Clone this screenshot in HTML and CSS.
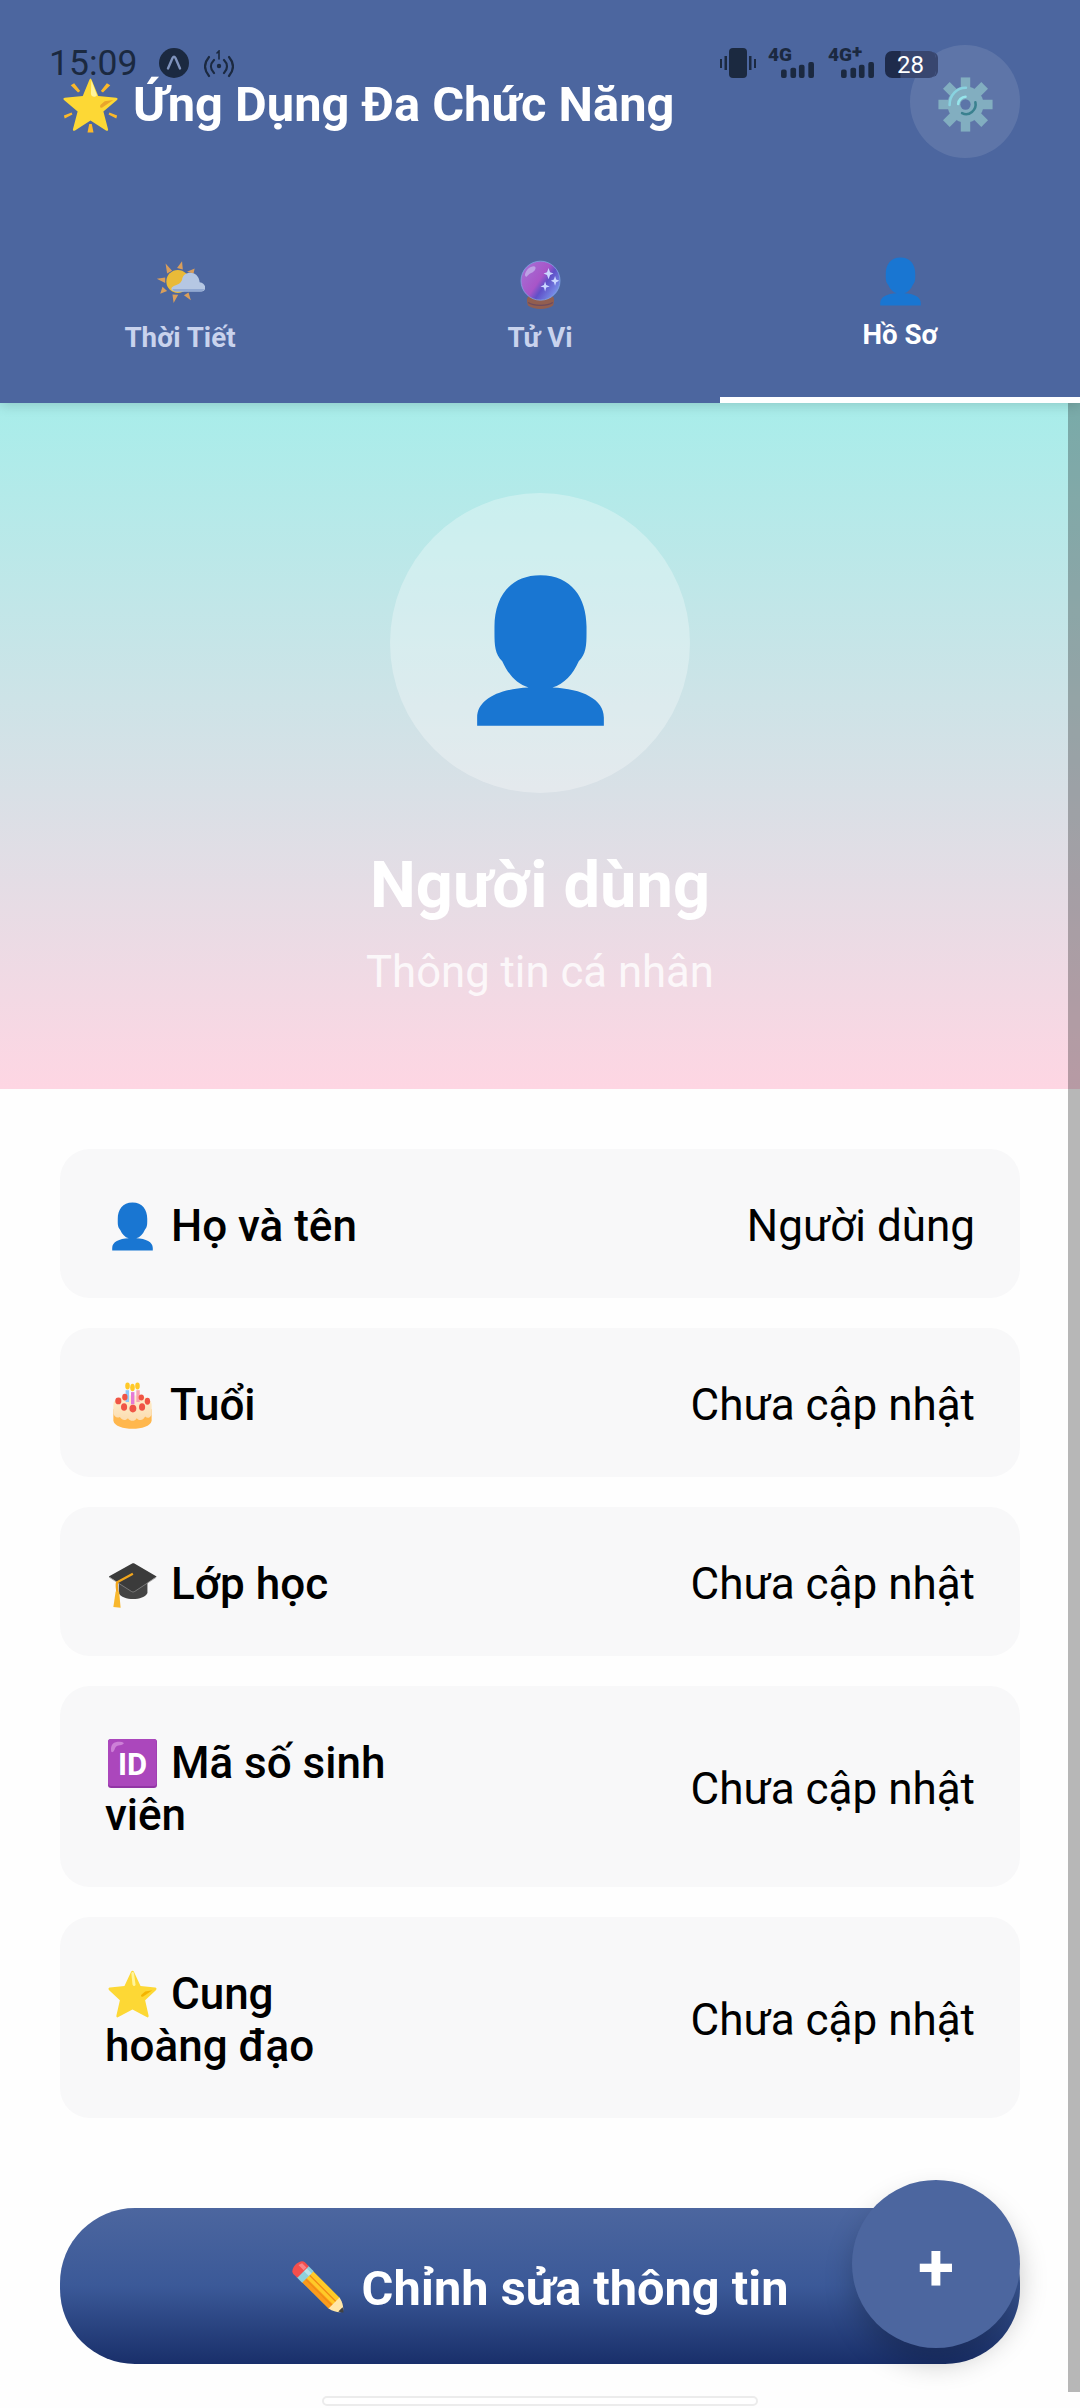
FILE: index.html
```html
<!DOCTYPE html>
<html lang="vi">
<head>
<meta charset="utf-8">
<title>Ứng Dụng Đa Chức Năng</title>
<link rel="stylesheet" href="styles.css">
</head>
<body>
<svg class="defs" aria-hidden="true">
  <defs>
    <linearGradient id="ball" x1="0" y1="0.2" x2="1" y2="0.9"><stop offset="0" stop-color="#a56fd4"/><stop offset=".45" stop-color="#a855c8"/><stop offset=".6" stop-color="#5f50c8"/><stop offset="1" stop-color="#82a8f5"/></linearGradient>
    <linearGradient id="cake" x1="0" y1="0" x2="0" y2="1"><stop offset="0" stop-color="#fff0cf"/><stop offset="1" stop-color="#fbdcb0"/></linearGradient>
    <symbol id="person" viewBox="0 0 128 128">
      <path fill="#1976d2" d="M64 1C38 1 25.500 20 25.500 44c0 14-.5 22 6.500 29 5 11 12 19 22 22-25 1-43 10-43 25v7h106v-7c0-15-18-24-43-25 10-3 17-11 22-22 7-7 6.500-15 6.500-29C102.500 20 90 1 64 1z"/>
    </symbol>
    <symbol id="star" viewBox="0 0 128 128">
      <path fill="#fdd835" d="M68 5l17 37 38 4c4 .5 5 4 2 7L97 79l9 40c1 4-2 6-5 4l-37-20-37 20c-3 2-6 0-5-4l9-40L3 53c-3-3-2-6.500 2-7l38-4L60 5c2-4 6-4 8 0z"/>
      <path fill="#fff59d" d="M68 9l4 30c-2 5-7 3-8-1L61 9c1-5 6-5 7 0z"/>
      <path fill="#f4b400" d="M116 53L92 69c-5 3-8-1-4-5l9-8z"/>
    </symbol>
  </defs>
</svg>

<header class="header">
  <div class="title-row">
    <h1 class="title">
      <svg class="title-icon" viewBox="0 0 128 128">
        <g fill="#fbb829"><path d="M18 17l8-5 14 18-5 4zM110 17l-8-5-14 18 5 4zM2 87l18-7 2 5L4 94zM126 87l-18-7-2 5 18 9zM61 107h6l4 20H57z"/></g>
        <path fill="#fdd835" d="M67 5l15 37 42 4c4 1 4 3 1 6L94 78l11 42c0 3-2 4-5 2L64 99l-36 23c-3 2-5 1-5-2l11-42L3 52c-3-3-3-5 1-6l42-4L61 5c2-5 4-5 6 0z"/>
        <path fill="#fff59d" d="M66 5l13 35c-5 6-13 4-14-3z"/>
        <path fill="#e9a62b" d="M117 51L94 67c-6 6-11-1-5-6l8-7z"/>
      </svg>
      <span class="title-text">Ứng Dụng Đa Chức Năng</span>
    </h1>
    <button class="settings" aria-label="Cài đặt">
      <svg viewBox="0 0 128 128">
        <g fill="#82aec0"><circle cx="64" cy="64" r="42"/>
          <path d="M53 1h22v126H53z"/><path d="M53 1h22v126H53z" transform="rotate(45 64 64)"/><path d="M53 1h22v126H53z" transform="rotate(90 64 64)"/><path d="M53 1h22v126H53z" transform="rotate(135 64 64)"/></g>
        <circle cx="64" cy="64" r="12" fill="#5c75a8"/>
        <g fill="none" stroke-width="6" stroke-linecap="round"><path stroke="#89d3e0" d="M27 65c0-23 17-40 38-40"/><path stroke="#96e5eb" d="M47 63c0-9 8-17 17-17"/><path stroke="#3a818f" d="M87 59c4 17-15 34-31 25"/></g>
      </svg>
    </button>
  </div>

  <nav class="tabs">
    <a class="tab">
      <svg class="tab-icon" viewBox="0 0 128 128">
        <g class="rays"><path d="M25 9l17 19-13 7zM68 3l2 22-15-4zM2 49l22-3v14zM11 88l6-18 12 11zM46 112l-3-22 15 1zM91 105L73 92l12-7zM81 31l20-9-3 13z"/></g>
        <circle cx="57" cy="56" r="30" fill="#e9ba38"/>
        <path fill="#b5c7e3" d="M51 82c-14 0-14-11-3-15 10-3 16-6 20-15 3-26 44-25 46 6 19 3 18 24 5 24z"/>
        <path fill="#91a9d3" d="M43 76h83c-2 5-5 6-10 6H53c-6 0-9-2-10-6z"/>
      </svg>
      <span>Thời Tiết</span>
    </a>
    <a class="tab">
      <svg class="tab-icon" viewBox="0 0 128 128">
        <path fill="#925e50" d="M34 94h60c7 4 6 13 3 25-15 12-51 12-66 0-3-12-4-21 3-25z"/>
        <path fill="none" stroke="#6d4b5e" stroke-width="3" d="M32 111c14 10 50 10 64 0"/>
        <circle cx="64" cy="54" r="51" fill="url(#ball)" stroke="#80a6e5" stroke-width="2"/>
        <path fill="#bda1e5" d="M23 40c2-14 13-24 24-24 9 2 2 14-6 17-8 2-12 11-15 11z"/>
        <path fill="#cbd7ff" d="M85 21l4 11 9 3-9 4-4 11-4-11-9-4 9-3zM102 42l3 9 8 3-8 4-3 9-3-9-8-4 8-3zM76 56l3 9 9 4-9 3-3 10-3-10-9-3 9-4z"/>
      </svg>
      <span>Tử Vi</span>
    </a>
    <a class="tab active">
      <svg class="tab-icon"><use href="#person"/></svg>
      <span>Hồ Sơ</span>
    </a>
  </nav>

  <div class="status">
    <span class="clock">15:09</span>
    <svg class="app-badge" viewBox="0 0 30 30"><circle cx="15" cy="15" r="15" fill="#1b2940"/><path d="M9 20.500L13.500 10q1.500-2.500 3 0L21 20.500" fill="none" stroke="#7f93bd" stroke-width="2.400" stroke-linecap="round"/></svg>
    <svg class="hotspot" viewBox="0 0 30 28" fill="none" stroke="#1b2940" stroke-width="2.200" stroke-linecap="round"><path d="M5 7c-5 6-5 13 0 19M10 10c-4 4-4 9 0 13M25 7c5 6 5 13 0 19M20 10c4 4 4 9 0 13"/><path stroke-width="1.600" d="M13 3l2-2v8"/><circle cx="15" cy="16" r="2.200" fill="#1b2940" stroke="none"/></svg>
    <svg class="vibrate" viewBox="0 0 36 30" fill="#1b2940"><rect x="9" width="18" height="30" rx="4"/><path d="M0 11h2v9H0zM4.500 8h2.500v14H4.500zM29 8h2.500v14H29zM34 11h2v9h-2z"/></svg>
    <div class="signal"><span>4G</span><svg viewBox="0 0 35 17" fill="#1b2940"><rect y="8" width="6" height="9" rx="2"/><rect x="10" y="6" width="6" height="11" rx="2"/><rect x="19" y="3" width="6" height="14" rx="2"/><rect x="29" width="6" height="17" rx="2"/></svg></div>
    <div class="signal"><span>4G<b>+</b></span><svg viewBox="0 0 35 17" fill="#1b2940"><rect y="8" width="6" height="9" rx="2"/><rect x="10" y="6" width="6" height="11" rx="2"/><rect x="19" y="3" width="6" height="14" rx="2"/><rect x="29" width="6" height="17" rx="2"/></svg></div>
    <div class="battery">28</div>
  </div>
</header>

<main>
  <section class="hero">
    <div class="avatar"><svg><use href="#person"/></svg></div>
    <h2 class="name">Người dùng</h2>
    <p class="subtitle">Thông tin cá nhân</p>
  </section>

  <section class="info">
    <div class="card">
      <div class="label"><svg class="emoji"><use href="#person"/></svg> Họ và tên</div>
      <div class="value">Người dùng</div>
    </div>
    <div class="card">
      <div class="label"><svg class="emoji" viewBox="0 0 128 128">
        <path fill="#ffb74d" d="M14 74h100v30c-5 28-95 28-100 0z"/>
        <path fill="url(#cake)" d="M14 61c0-32 100-32 100 0v27c-6 10-11 10-17 5-6 12-16 11-22 4-6 9-16 9-23 0-6 7-15 6-21-3-8 4-15-1-17-9z"/>
        <path fill="#90caf9" d="M46 24h9v31h-9z"/><path fill="#e57ad5" d="M60 29h9v32h-9z"/><path fill="#f8a5b0" d="M74 24h9v31h-9z"/>
        <g fill="#ffc928"><ellipse cx="51" cy="13" rx="6" ry="9"/><ellipse cx="64" cy="17" rx="6" ry="10"/><ellipse cx="77" cy="13" rx="6" ry="9"/></g>
        <g fill="#f05545"><ellipse cx="44" cy="42" rx="7" ry="9"/><ellipse cx="27" cy="52" rx="8" ry="9"/><ellipse cx="42" cy="68" rx="8" ry="10"/><ellipse cx="65" cy="72" rx="9" ry="10"/><ellipse cx="89" cy="68" rx="8" ry="10"/><ellipse cx="103" cy="53" rx="7" ry="9"/><ellipse cx="87" cy="43" rx="7" ry="8"/></g>
      </svg> Tuổi</div>
      <div class="value">Chưa cập nhật</div>
    </div>
    <div class="card">
      <div class="label"><svg class="emoji" viewBox="0 0 128 128">
        <path fill="#444" d="M28 54v32c10 21 65 21 75 0V54z"/>
        <path fill="#3b3b3b" d="M2 43L63 9c2-1 4-1 6 0l58 34-57 39c-3 2-6 2-9 0z"/>
        <path fill="none" stroke="#8a8a8a" stroke-width="2" d="M3 45l58 37c3 2 6 2 9 0l56-37"/>
        <path fill="none" stroke="#f2a51c" stroke-width="6" d="M65 36L24 58c-4 10 3 25 0 36"/>
        <path fill="#f8b72d" d="M20 82l9 1 4 42-19-2z"/>
      </svg> Lớp học</div>
      <div class="value">Chưa cập nhật</div>
    </div>
    <div class="card">
      <div class="label"><svg class="emoji" viewBox="0 0 128 128">
        <rect width="128" height="128" rx="8" fill="#9234a5"/><rect width="127" height="123" rx="8" fill="#ab47bc"/>
        <path fill="#cd80d7" d="M8 30C7 13 14 7 31 7c16 1 11 8 0 9-11 1-11 5-15 14-3 6-8 6-8 0z"/>
        <text class="id-text" x="64" y="94" text-anchor="middle">ID</text>
      </svg> Mã số sinh viên</div>
      <div class="value">Chưa cập nhật</div>
    </div>
    <div class="card">
      <div class="label"><svg class="emoji"><use href="#star"/></svg> Cung<br>hoàng đạo</div>
      <div class="value">Chưa cập nhật</div>
    </div>
  </section>

  <button class="edit">
    <svg class="pencil" viewBox="0 0 128 128">
      <g transform="translate(13 13) rotate(45)">
        <path fill="#ffca28" d="M30-18h92v36H30z"/><path fill="#fb9b1c" d="M30 4h92v14H30z"/><path fill="#f28c14" d="M30-7h92v3H30zM30 6h92v3H30z"/>
        <path fill="#ffe6a8" d="M120-18c14 3 24 10 29 18-5 8-15 15-29 18z"/><path fill="#424242" d="M141-7c5 2 8 5 10 7-2 2-5 5-10 7z"/>
        <path fill="#8ed0dc" d="M16-19h18v38H16z"/><path fill="#b9e3ea" d="M16-12h18v9H16z"/>
        <path fill="#f44f4c" d="M18-19H5C-10-18-10 18 5 19h13z"/><path fill="#fb8588" d="M2-13h14v9H-1z"/>
      </g>
    </svg>
    <span>Chỉnh sửa thông tin</span>
  </button>
</main>

<button class="fab">+</button>
<div class="scrollbar"></div>
<div class="home-pill"></div>
</body>
</html>
```
FILE: styles.css
```css
* { box-sizing: border-box; margin: 0; padding: 0; }

body {
  position: relative;
  width: 1080px;
  height: 2408px;
  overflow: hidden;
  background: #fefefe;
  font-family: Roboto, "Noto Sans", sans-serif;
  color: #000;
}

button { border: 0; font: inherit; color: inherit; }
.defs { position: absolute; width: 0; height: 0; }

/* Header */
.header {
  position: relative;
  z-index: 2;
  display: flex;
  flex-direction: column;
  height: 403px;
  background: #4c669f;
  box-shadow: 0 2px 12px rgba(0, 0, 0, .16);
  color: #fff;
}

.title-row {
  display: flex;
  align-items: center;
  justify-content: space-between;
  height: 203px;
  padding: 0 60px;
}

.title { display: flex; align-items: center; font-size: 48.800px; font-weight: 700; line-height: 58px; }
.title-icon { width: 55px; height: 55px; margin: 7px 15px 0 3px; }
.title-text { padding-top: 6px; white-space: nowrap; }

.settings {
  display: flex;
  align-items: center;
  justify-content: center;
  width: 110px;
  height: 113px;
  border-radius: 50%;
  background: rgba(255, 255, 255, .1);
}
.settings svg { width: 55px; height: 55px; margin-top: 5px; }

.tabs { display: flex; flex: 1; }
.tab {
  display: flex;
  flex: 1;
  flex-direction: column;
  align-items: center;
  padding-top: 57px;
  border-bottom: 0 solid #fff;
  font-size: 27.700px;
  font-weight: 700;
  line-height: 34px;
  color: #c9d3ed;
}
.tab-icon { width: 49px; height: 49px; margin-bottom: 12px; }
.tab.active { padding-top: 54px; border-bottom-width: 6px; color: #fff; }
.rays { fill: #d99e5b; }

/* System status bar, floating over the header */
.status { position: absolute; inset: 48px 0 auto 49px; display: flex; height: 30px; color: #1b2940; }
.clock { width: 110px; font-size: 35.500px; line-height: 30px; }
.app-badge { width: 30px; height: 30px; }
.hotspot { width: 30px; height: 28px; margin: 2px 0 0 15px; }
.vibrate { width: 36px; height: 30px; margin-left: 486px; }
.signal { display: flex; flex-direction: column; width: 48px; margin-left: 12px; font-size: 19px; font-weight: 900; line-height: 14px; }
.signal + .signal { margin-left: 12px; }
.signal svg { width: 35px; height: 17px; margin: 0 0 0 12px; }
.signal b { position: relative; top: -3px; }
.battery {
  width: 51px;
  height: 27px;
  margin: 3px 0 0 9px;
  border-radius: 7px;
  background: linear-gradient(90deg, #1e2b4b 15px, #38466f 16px);
  box-shadow: 3px 0 0 -1px #38466f;
  color: #fff;
  font-size: 24px;
  line-height: 28px;
  text-align: center;
}

/* Profile banner */
.hero {
  display: flex;
  flex-direction: column;
  align-items: center;
  height: 686px;
  padding-top: 90px;
  background: linear-gradient(#a8edea, #fed6e3);
  color: #fff;
}
.avatar {
  display: flex;
  align-items: center;
  justify-content: center;
  width: 300px;
  height: 300px;
  border-radius: 50%;
  background: rgba(255, 255, 255, .3);
}
.avatar svg { width: 153px; height: 153px; margin-top: 14px; }
.name { margin-top: 53px; font-size: 65px; font-weight: 700; line-height: 78px; }
.subtitle { margin-top: 22px; font-size: 43.700px; line-height: 52px; opacity: .8; }

/* Profile fields */
.info { display: flex; flex-direction: column; gap: 30px; padding: 60px 60px 90px; }
.card {
  display: flex;
  align-items: center;
  justify-content: space-between;
  min-height: 149px;
  padding: 51px 45px 46px;
  border-radius: 30px;
  background: #f8f8f9;
  font-size: 44px;
  line-height: 52px;
}
.label { width: 300px; font-weight: 500; }
.value { white-space: nowrap; }
.emoji { width: 49px; height: 49px; margin: -20px 3px; vertical-align: 10.500px; }
.id-text { fill: #fff; font-size: 81px; font-weight: 700; }

.edit {
  display: flex;
  align-items: center;
  justify-content: center;
  width: 960px;
  height: 156px;
  margin-left: 60px;
  border-radius: 75px;
  background: linear-gradient(#4c669f, #3b5998 50%, #192f6a);
  color: #fff;
  font-size: 48.700px;
  font-weight: 700;
  line-height: 58px;
}
.edit span { padding-top: 6px; }
.pencil { width: 55px; height: 55px; margin: 4px 15px 0 0; }

/* Floating layers */
.fab {
  position: absolute;
  left: 852px;
  top: 2180px;
  width: 168px;
  height: 168px;
  padding-top: 7px;
  border-radius: 50%;
  background: #4c669f;
  box-shadow: 0 15px 28px rgba(0, 0, 0, .22);
  color: #fff;
  font-size: 66px;
  font-weight: 700;
}
.scrollbar { position: absolute; z-index: 1; top: 403px; right: 0; width: 12px; height: 1989px; background: rgba(0, 0, 0, .28); }
.home-pill { position: absolute; left: 322px; top: 2396px; width: 436px; height: 10px; border: 2px solid #ececec; border-radius: 5px; background: #fff; }
```
